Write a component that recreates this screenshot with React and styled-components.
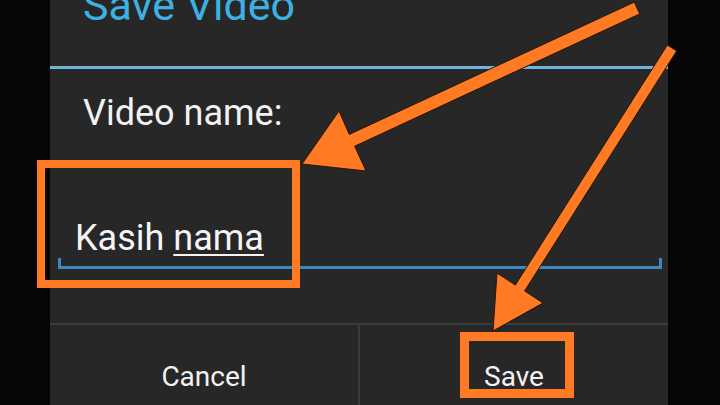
import React from 'react';
import styled, { createGlobalStyle } from 'styled-components';

const GlobalStyle = createGlobalStyle`
  html, body {
    margin: 0;
    padding: 0;
    background: #060606;
  }
  body {
    font-family: Roboto, "Noto Sans", "Liberation Sans", sans-serif;
  }
`;

const Screen = styled.div`
  position: relative;
  width: 720px;
  height: 405px;
  overflow: hidden;
  background: #060606;
  display: flex;
  padding-left: 50px;
  box-sizing: border-box;
`;

const Dialog = styled.div`
  width: 618px;
  height: 405px;
  background: #272727;
  display: flex;
  flex-direction: column;
`;

const Header = styled.div`
  height: 66px;
  border-bottom: 3px solid #6fb4dc;
  padding-left: 33px;
`;

const Title = styled.div`
  margin-top: -16px;
  font-size: 43px;
  line-height: 43px;
  color: #3db2e2;
`;

const Body = styled.div`
  display: flex;
  flex-direction: column;
`;

const Label = styled.div`
  margin: 23px 0 0 33px;
  font-size: 36px;
  line-height: 42px;
  color: #f2f2f2;
`;

const Field = styled.div`
  position: relative;
  margin-left: 8px;
  width: 604px;
  padding: 83px 0 7px 17px;
  box-sizing: border-box;
  border-bottom: 3px solid #3a8ac2;
  font-size: 36px;
  line-height: 42px;
  color: #f4f4f4;

  &::before,
  &::after {
    content: '';
    position: absolute;
    bottom: -3px;
    width: 3px;
    height: 11px;
    background: #3a8ac2;
  }
  &::before { left: 0; }
  &::after { right: 0; }
`;

const Misspelled = styled.span`
  text-decoration: underline;
  text-decoration-thickness: 2px;
  text-underline-offset: 4px;
`;

const ButtonBar = styled.div`
  margin-top: auto;
  height: 80px;
  border-top: 2px solid #3c3c3c;
  display: flex;
`;

const Button = styled.div`
  flex: 1;
  padding-top: 38px;
  text-align: center;
  font-size: 28px;
  line-height: 28px;
  color: #f2f2f2;
  border-left: ${({ $divider }) => ($divider ? '2px solid #3a3a3a' : 'none')};
`;

const Overlay = styled.svg`
  position: absolute;
  left: 0;
  top: 0;
  pointer-events: none;
`;

const ORANGE = '#ff7a22';

const Annotations = () => (
  <Overlay width="720" height="405" viewBox="0 0 720 405">
    <rect x="41" y="164" width="255" height="120" fill="none" stroke={ORANGE} strokeWidth="8" />
    <rect x="464.5" y="336.5" width="105" height="57" fill="none" stroke={ORANGE} strokeWidth="9" />
    <polygon
      points="634.3,2.1 349.3,134.4 339,111 302,164 366,171 354.7,146.2 639.7,13.9"
      fill={ORANGE}
      stroke="#2a1408"
      strokeWidth="1"
    />
    <polygon
      points="667.35,45.06 515.35,285.06 497,273 493,331 543,303 524.65,290.94 676.65,50.94"
      fill={ORANGE}
      stroke="#2a1408"
      strokeWidth="1"
    />
  </Overlay>
);

const App = () => {
  return (
    <Screen>
      <GlobalStyle />
      <Dialog>
        <Header>
          <Title>Save Video</Title>
        </Header>
        <Body>
          <Label>Video name:</Label>
          <Field>
            Kasih <Misspelled>nama</Misspelled>
          </Field>
        </Body>
        <ButtonBar>
          <Button>Cancel</Button>
          <Button $divider>Save</Button>
        </ButtonBar>
      </Dialog>
      <Annotations />
    </Screen>
  );
};

export default App;
